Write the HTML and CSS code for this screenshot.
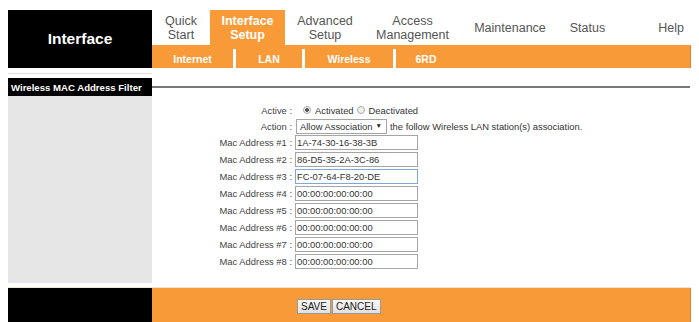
FILE: index.html
```html
<!DOCTYPE html>
<html lang="en">
<head>
    <meta charset="UTF-8">
    <title>Wireless MAC Address Filter</title>
    <link rel="stylesheet" href="styles.css">
</head>
<body>
    <div class="page">
        <!-- top: brand + menu -->
        <div class="top">
            <div class="brand">Interface</div>
            <div class="menu">
                <ul class="tabs">
                    <li class="tab tab-quick">Quick<br>Start</li>
                    <li class="tab tab-iface active">Interface<br>Setup</li>
                    <li class="tab tab-adv">Advanced<br>Setup</li>
                    <li class="tab tab-access">Access<br>Management</li>
                    <li class="tab tab-maint">Maintenance</li>
                    <li class="tab tab-status">Status</li>
                    <li class="tab tab-help">Help</li>
                </ul>
                <ul class="subtabs">
                    <li class="sub-internet">Internet</li>
                    <li class="sub-lan">LAN</li>
                    <li class="sub-wireless">Wireless</li>
                    <li class="sub-6rd">6RD</li>
                </ul>
            </div>
        </div>

        <div class="spacer"><div class="spacer-left"></div></div>

        <div class="section">
            <div class="section-title">Wireless MAC Address Filter</div>
            <div class="section-rule"></div>
        </div>

        <div class="content">
            <div class="side"></div>
            <form class="form">
                <label class="lbl">Active :</label>
                <div class="val">
                    <input type="radio" name="active" class="radio" checked> Activated
                    <input type="radio" name="active" class="radio radio-2"> Deactivated
                </div>

                <label class="lbl">Action :</label>
                <div class="val">
                    <span class="dropdown">
                        <select>
                            <option>Allow Association</option>
                            <option>Deny Association</option>
                        </select>
                        <span class="caret">&#9660;</span>
                    </span>
                    <span class="hint">the follow Wireless LAN station(s) association.</span>
                </div>

                <label class="lbl">Mac Address #1 :</label>
                <div class="val"><input type="text" class="mac" value="1A-74-30-16-38-3B"></div>
                <label class="lbl">Mac Address #2 :</label>
                <div class="val"><input type="text" class="mac" value="86-D5-35-2A-3C-86"></div>
                <label class="lbl">Mac Address #3 :</label>
                <div class="val"><input type="text" class="mac focused" value="FC-07-64-F8-20-DE"></div>
                <label class="lbl">Mac Address #4 :</label>
                <div class="val"><input type="text" class="mac" value="00:00:00:00:00:00"></div>
                <label class="lbl">Mac Address #5 :</label>
                <div class="val"><input type="text" class="mac" value="00:00:00:00:00:00"></div>
                <label class="lbl">Mac Address #6 :</label>
                <div class="val"><input type="text" class="mac" value="00:00:00:00:00:00"></div>
                <label class="lbl">Mac Address #7 :</label>
                <div class="val"><input type="text" class="mac" value="00:00:00:00:00:00"></div>
                <label class="lbl">Mac Address #8 :</label>
                <div class="val"><input type="text" class="mac" value="00:00:00:00:00:00"></div>
            </form>
        </div>

        <div class="footer">
            <div class="footer-left"></div>
            <div class="footer-right">
                <button type="button" class="btn">SAVE</button>
                <button type="button" class="btn">CANCEL</button>
            </div>
        </div>
    </div>
</body>
</html>
```

FILE: styles.css
```css
* {
    box-sizing: border-box;
}

body {
    margin: 10px 8px 0;
    font-family: 'Liberation Sans', Arial, sans-serif;
    background-color: #ffffff;
    color: #333;
    overflow: hidden;
}

.page {
    width: 683px;
}

ul {
    list-style: none;
    margin: 0;
    padding: 0;
}

/* top */
.top {
    display: flex;
    height: 58px;
}

.brand {
    width: 144px;
    background-color: #000;
    color: #fff;
    font-weight: bold;
    font-size: 15.5px;
    display: flex;
    align-items: center;
    justify-content: center;
}

.menu {
    flex: 1;
    display: flex;
    flex-direction: column;
}

.tabs {
    display: flex;
    height: 35px;
}

.tab {
    display: flex;
    align-items: center;
    justify-content: center;
    text-align: center;
    font-size: 12.5px;
    line-height: 14px;
    color: #555;
}

.tab.active {
    background-color: #f99a38;
    color: #fff;
    font-weight: bold;
}

.tab-quick { width: 58px; }
.tab-iface { width: 75px; }
.tab-adv { width: 80px; }
.tab-access { width: 95px; }
.tab-maint { width: 100px; }
.tab-status { width: 55px; }

.tab-help {
    flex: 1;
    justify-content: flex-end;
    padding-right: 7px;
}

.subtabs {
    display: flex;
    height: 23px;
    padding-top: 4px;
    background-color: #f99a38;
    border-right: 1px solid #e2862c;
}

.subtabs li {
    height: 19px;
    display: flex;
    align-items: center;
    justify-content: center;
    color: #fff;
    font-weight: bold;
    font-size: 10.5px;
    border-left: 3px solid #fff;
}

.subtabs .sub-internet { width: 81px; border-left: none; }
.subtabs .sub-lan { width: 69px; }
.subtabs .sub-wireless { width: 91px; }
.subtabs .sub-6rd { width: 63px; }

/* gap under menu */
.spacer {
    height: 10px;
}

.spacer-left {
    width: 144px;
    height: 6px;
    border-bottom: 1px solid #dedede;
}

/* section title */
.section {
    display: flex;
    height: 18px;
}

.section-title {
    width: 144px;
    background-color: #000;
    color: #fff;
    font-weight: bold;
    font-size: 9.6px;
    padding-left: 3px;
    display: flex;
    align-items: center;
}

.section-rule {
    flex: 1;
    height: 2px;
    background-color: #777;
    align-self: center;
    margin-right: 1px;
}

/* content */
.content {
    display: flex;
    height: 187px;
}

.side {
    width: 144px;
    background-color: #e6e6e6;
}

.form {
    flex: 1;
    margin: 0;
    padding-top: 6px;
    display: grid;
    grid-template-columns: 140px auto;
    grid-template-rows: 16px 16px;
    grid-auto-rows: 17px;
    column-gap: 4px;
    align-content: start;
    font-size: 9.4px;
}

.lbl {
    text-align: right;
    align-self: center;
    color: #444;
}

.val {
    display: flex;
    align-items: center;
    color: #333;
}

.radio {
    appearance: none;
    width: 8px;
    height: 8px;
    margin: 0 4px 0 7px;
    border: 1px solid #aaa;
    border-radius: 50%;
    background-color: #f0f0f0;
}

.radio:checked {
    background: radial-gradient(circle, #555 0, #555 1.6px, #eee 2px);
}

.radio-2 {
    margin-left: 3px;
}

.dropdown {
    position: relative;
    width: 91px;
    height: 15px;
    border: 1px solid #a5a5a5;
    background-color: #fff;
}

.dropdown select {
    appearance: none;
    border: none;
    background: transparent;
    width: 100%;
    height: 13px;
    padding: 0 0 0 3px;
    font-family: inherit;
    font-size: 9.4px;
    color: #333;
    outline: none;
}

.caret {
    position: absolute;
    right: 4px;
    top: 2px;
    font-size: 6.5px;
    color: #222;
}

.hint {
    margin-left: 3px;
}

.mac {
    width: 123px;
    height: 15px;
    border: 1px solid #a5a5a5;
    padding: 0 1px;
    font-family: inherit;
    font-size: 9.4px;
    color: #333;
    outline: none;
    margin-left: -1px;
}

.mac.focused {
    border-color: #7fa8d6;
}

/* footer */
.footer {
    display: flex;
    height: 35px;
    margin-top: 4px;
    border-top: 1px solid #f3e2cf;
}

.footer-left {
    width: 144px;
    background-color: #000;
}

.footer-right {
    flex: 1;
    background-color: #f99a38;
    display: flex;
    align-items: center;
    padding-left: 145px;
    padding-top: 2px;
    border-right: 1px solid #e2862c;
}

.btn {
    height: 15px;
    padding: 0 3px;
    margin-right: 1px;
    border: 1px solid #999;
    background: linear-gradient(#f8f8f8, #e0e0e0);
    font-family: inherit;
    font-size: 10px;
    color: #222;
}
```
